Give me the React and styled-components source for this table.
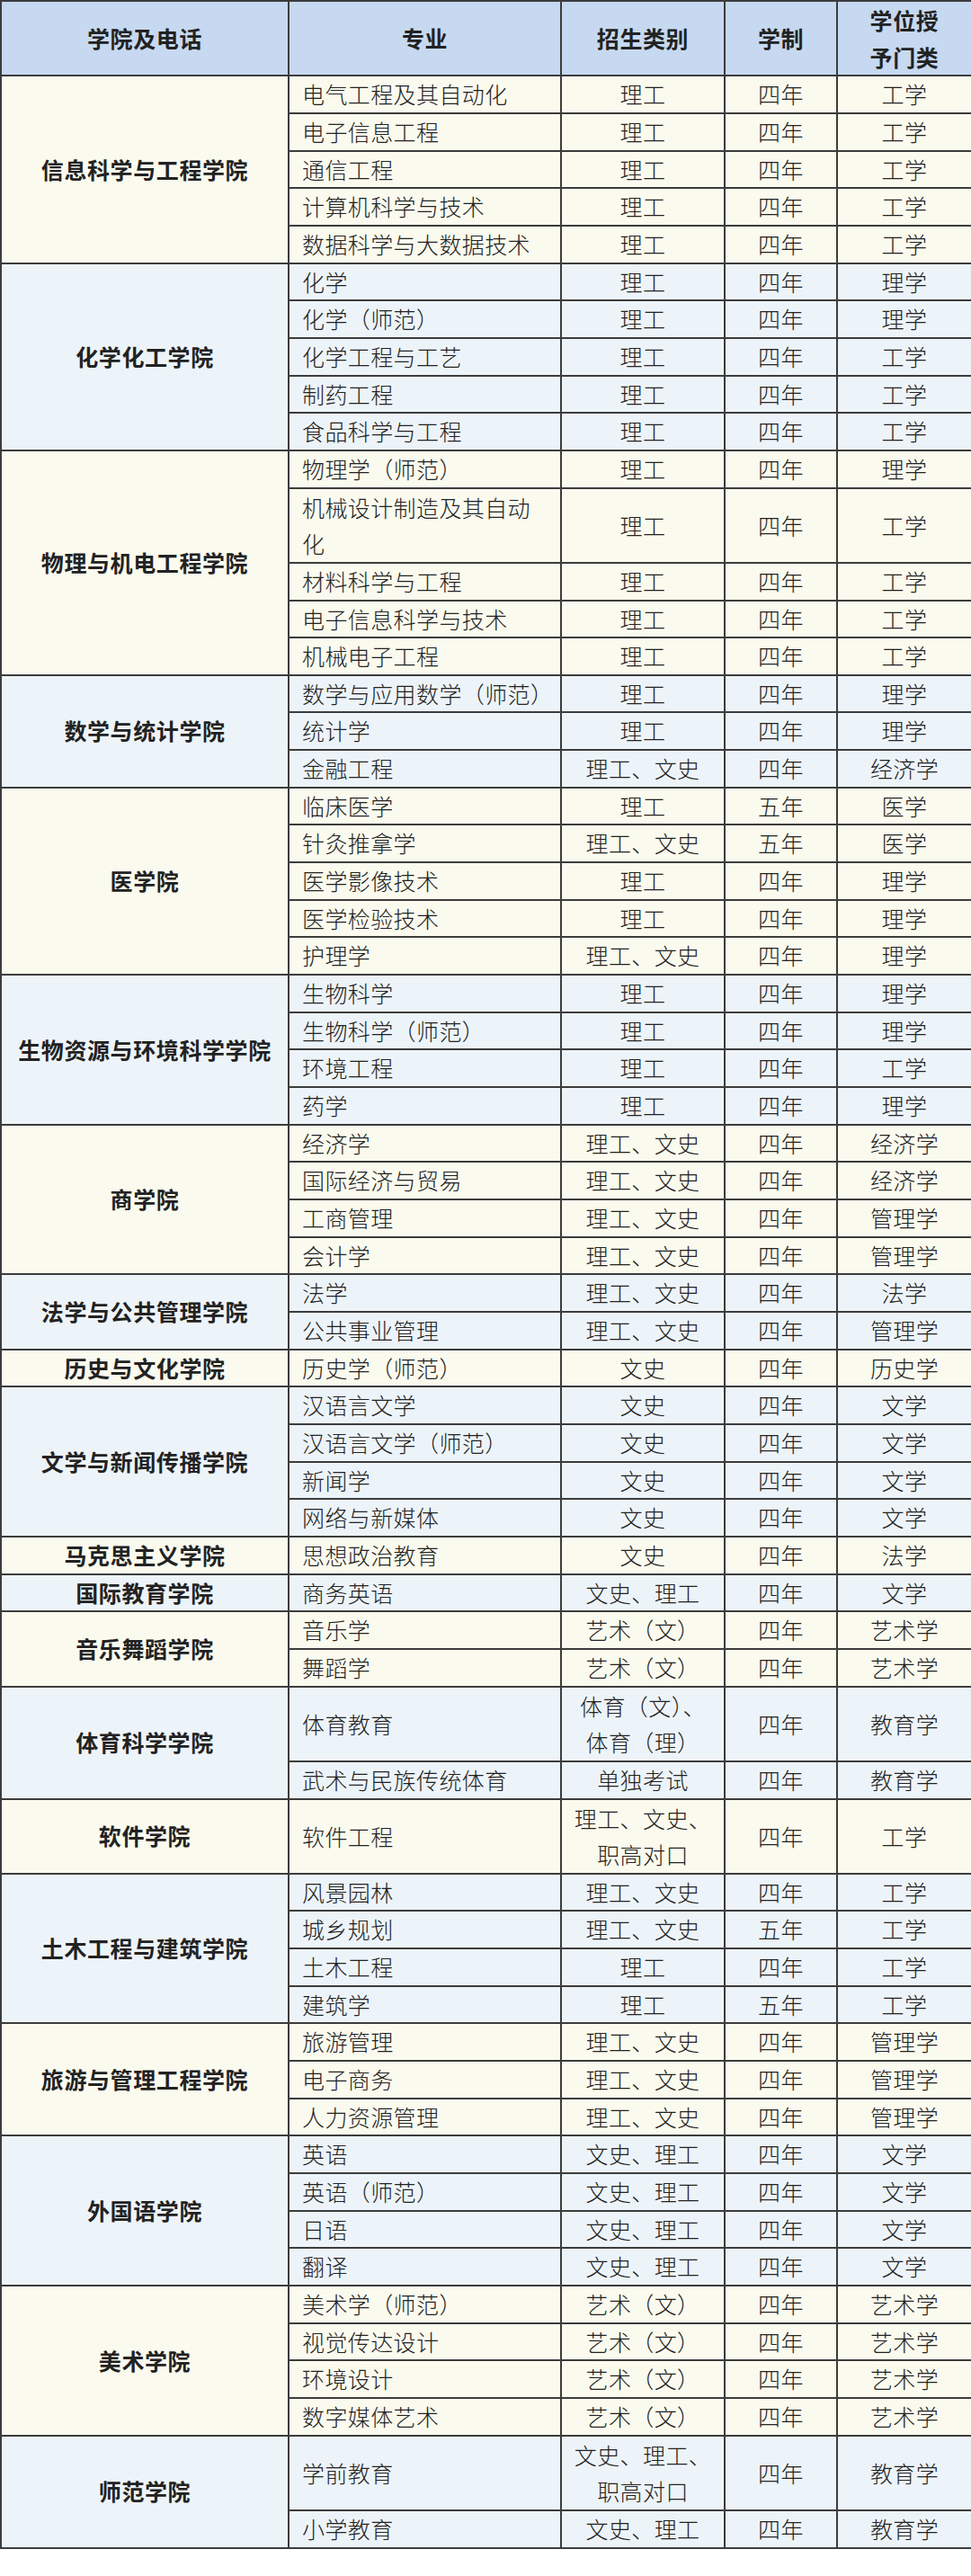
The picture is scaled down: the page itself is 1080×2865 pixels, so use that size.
import React from 'react';
import styled, { createGlobalStyle } from 'styled-components';

const GlobalStyle = createGlobalStyle`
  html, body {
    margin: 0;
    padding: 0;
    background: #ffffff;
  }
  body {
    font-family: "Noto Sans CJK SC", "Noto Sans", sans-serif;
  }
`;

const colleges = [
  { name: '信息科学与工程学院', rows: [
    ['电气工程及其自动化', '理工', '四年', '工学'],
    ['电子信息工程', '理工', '四年', '工学'],
    ['通信工程', '理工', '四年', '工学'],
    ['计算机科学与技术', '理工', '四年', '工学'],
    ['数据科学与大数据技术', '理工', '四年', '工学'],
  ] },
  { name: '化学化工学院', rows: [
    ['化学', '理工', '四年', '理学'],
    ['化学（师范）', '理工', '四年', '理学'],
    ['化学工程与工艺', '理工', '四年', '工学'],
    ['制药工程', '理工', '四年', '工学'],
    ['食品科学与工程', '理工', '四年', '工学'],
  ] },
  { name: '物理与机电工程学院', rows: [
    ['物理学（师范）', '理工', '四年', '理学'],
    ['机械设计制造及其自动\n化', '理工', '四年', '工学'],
    ['材料科学与工程', '理工', '四年', '工学'],
    ['电子信息科学与技术', '理工', '四年', '工学'],
    ['机械电子工程', '理工', '四年', '工学'],
  ] },
  { name: '数学与统计学院', rows: [
    ['数学与应用数学（师范）', '理工', '四年', '理学'],
    ['统计学', '理工', '四年', '理学'],
    ['金融工程', '理工、文史', '四年', '经济学'],
  ] },
  { name: '医学院', rows: [
    ['临床医学', '理工', '五年', '医学'],
    ['针灸推拿学', '理工、文史', '五年', '医学'],
    ['医学影像技术', '理工', '四年', '理学'],
    ['医学检验技术', '理工', '四年', '理学'],
    ['护理学', '理工、文史', '四年', '理学'],
  ] },
  { name: '生物资源与环境科学学院', rows: [
    ['生物科学', '理工', '四年', '理学'],
    ['生物科学（师范）', '理工', '四年', '理学'],
    ['环境工程', '理工', '四年', '工学'],
    ['药学', '理工', '四年', '理学'],
  ] },
  { name: '商学院', rows: [
    ['经济学', '理工、文史', '四年', '经济学'],
    ['国际经济与贸易', '理工、文史', '四年', '经济学'],
    ['工商管理', '理工、文史', '四年', '管理学'],
    ['会计学', '理工、文史', '四年', '管理学'],
  ] },
  { name: '法学与公共管理学院', rows: [
    ['法学', '理工、文史', '四年', '法学'],
    ['公共事业管理', '理工、文史', '四年', '管理学'],
  ] },
  { name: '历史与文化学院', rows: [
    ['历史学（师范）', '文史', '四年', '历史学'],
  ] },
  { name: '文学与新闻传播学院', rows: [
    ['汉语言文学', '文史', '四年', '文学'],
    ['汉语言文学（师范）', '文史', '四年', '文学'],
    ['新闻学', '文史', '四年', '文学'],
    ['网络与新媒体', '文史', '四年', '文学'],
  ] },
  { name: '马克思主义学院', rows: [
    ['思想政治教育', '文史', '四年', '法学'],
  ] },
  { name: '国际教育学院', rows: [
    ['商务英语', '文史、理工', '四年', '文学'],
  ] },
  { name: '音乐舞蹈学院', rows: [
    ['音乐学', '艺术（文）', '四年', '艺术学'],
    ['舞蹈学', '艺术（文）', '四年', '艺术学'],
  ] },
  { name: '体育科学学院', rows: [
    ['体育教育', '体育（文）、\n体育（理）', '四年', '教育学'],
    ['武术与民族传统体育', '单独考试', '四年', '教育学'],
  ] },
  { name: '软件学院', rows: [
    ['软件工程', '理工、文史、\n职高对口', '四年', '工学'],
  ] },
  { name: '土木工程与建筑学院', rows: [
    ['风景园林', '理工、文史', '四年', '工学'],
    ['城乡规划', '理工、文史', '五年', '工学'],
    ['土木工程', '理工', '四年', '工学'],
    ['建筑学', '理工', '五年', '工学'],
  ] },
  { name: '旅游与管理工程学院', rows: [
    ['旅游管理', '理工、文史', '四年', '管理学'],
    ['电子商务', '理工、文史', '四年', '管理学'],
    ['人力资源管理', '理工、文史', '四年', '管理学'],
  ] },
  { name: '外国语学院', rows: [
    ['英语', '文史、理工', '四年', '文学'],
    ['英语（师范）', '文史、理工', '四年', '文学'],
    ['日语', '文史、理工', '四年', '文学'],
    ['翻译', '文史、理工', '四年', '文学'],
  ] },
  { name: '美术学院', rows: [
    ['美术学（师范）', '艺术（文）', '四年', '艺术学'],
    ['视觉传达设计', '艺术（文）', '四年', '艺术学'],
    ['环境设计', '艺术（文）', '四年', '艺术学'],
    ['数字媒体艺术', '艺术（文）', '四年', '艺术学'],
  ] },
  { name: '师范学院', rows: [
    ['学前教育', '文史、理工、\n职高对口', '四年', '教育学'],
    ['小学教育', '文史、理工', '四年', '教育学'],
  ] },
];

// one table line is ~41.65px tall; the 2px border is taken out of the cell box
const ROW = 41.65;
const LINE = ROW - 2;
const TALL = ROW * 2 - 2;

const Page = styled.div`
  width: 1080px;
  padding-bottom: 31px;
`;

const Table = styled.table`
  width: 1080px;
  border-collapse: collapse;
  table-layout: fixed;
  color: #262626;
`;

const Col = styled.col`
  width: ${(p) => p.$w}px;
`;

const HeadCell = styled.th`
  height: ${TALL}px;
  background: #c6d9f0;
  border: 2px solid #3c3c3c;
  font-size: 25px;
  font-weight: 700;
  line-height: ${TALL / 2}px;
  letter-spacing: 0.6px;
  text-align: center;
  vertical-align: middle;
  padding: 0;
  color: #222;
`;

const Row = styled.tr`
  background: ${(p) => (p.$tone === 'blue' ? '#edf4f9' : '#fafaee')};
`;

const CollegeCell = styled.td`
  border: 2px solid #3c3c3c;
  font-size: 25px;
  font-weight: 700;
  line-height: ${LINE}px;
  letter-spacing: 0.6px;
  text-align: center;
  vertical-align: middle;
  padding: 0;
  color: #222;
`;

const Cell = styled.td`
  height: ${(p) => (p.$tall ? TALL : LINE)}px;
  border: 2px solid #3c3c3c;
  font-size: 25px;
  font-weight: 300;
  line-height: ${(p) => (p.$tall ? TALL / 2 : LINE)}px;
  letter-spacing: 0.4px;
  text-align: ${(p) => (p.$left ? 'left' : 'center')};
  padding: ${(p) => (p.$left ? '0 0 0 14px' : '0')};
  vertical-align: middle;
  white-space: pre-line;
  color: #222;
`;

export default function App() {
  return (
    <Page>
      <GlobalStyle />
      <Table>
        <colgroup>
          <Col $w={320} />
          <Col $w={303} />
          <Col $w={182} />
          <Col $w={125} />
          <Col $w={150} />
        </colgroup>
        <thead>
          <tr>
            <HeadCell>学院及电话</HeadCell>
            <HeadCell>专业</HeadCell>
            <HeadCell>招生类别</HeadCell>
            <HeadCell>学制</HeadCell>
            <HeadCell>学位授<br />予门类</HeadCell>
          </tr>
        </thead>
        <tbody>
          {colleges.map((college, ci) =>
            college.rows.map((r, ri) => {
              const tall = r.some((t) => t.includes('\n'));
              return (
                <Row key={college.name + ri} $tone={ci % 2 ? 'blue' : 'cream'}>
                  {ri === 0 && (
                    <CollegeCell rowSpan={college.rows.length}>{college.name}</CollegeCell>
                  )}
                  <Cell $left $tall={tall}>{r[0]}</Cell>
                  <Cell $tall={tall}>{r[1]}</Cell>
                  <Cell $tall={tall}>{r[2]}</Cell>
                  <Cell $tall={tall}>{r[3]}</Cell>
                </Row>
              );
            })
          )}
        </tbody>
      </Table>
    </Page>
  );
}
